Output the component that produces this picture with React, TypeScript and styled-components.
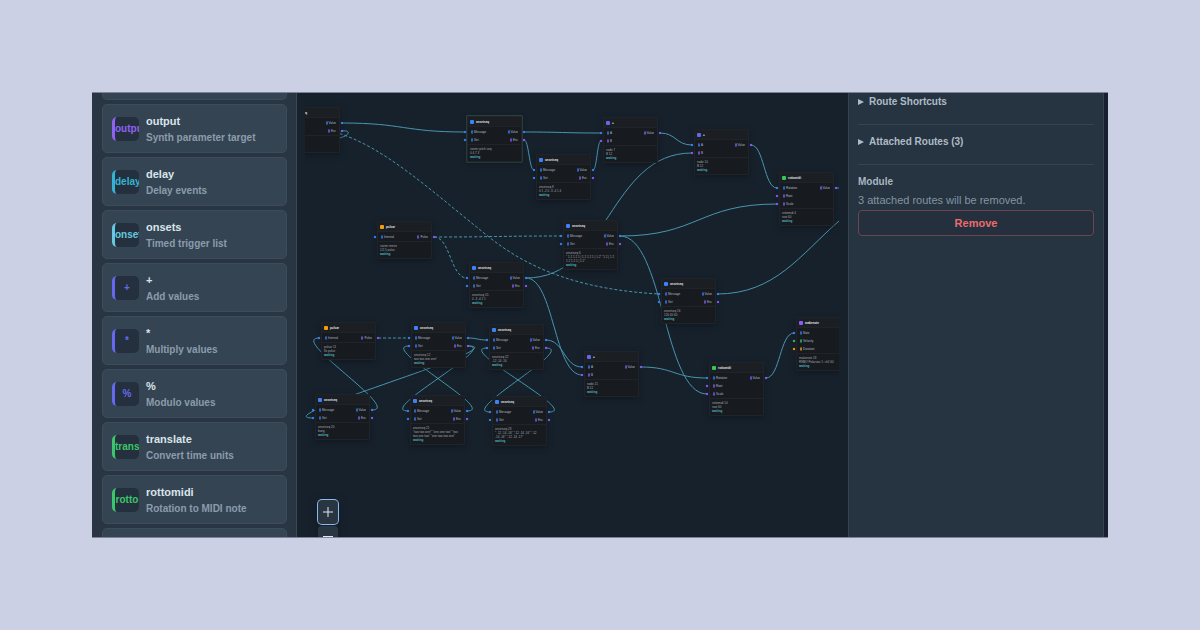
import React from "react";
import styled, { createGlobalStyle } from "styled-components";

const GlobalStyle = createGlobalStyle`
  *, *::before, *::after { box-sizing: border-box; }
  body {
    margin: 0;
    background: #cbd0e5;
    font-family: "Liberation Sans", Arial, Helvetica, sans-serif;
  }
  button { font: inherit; }
`;

const Page = styled.main`
  display: grid;
  height: 100vh;
  padding: 92px;
`;

const AppFrame = styled.div`
  display: grid;
  grid-template-columns: 205px minmax(0, 1fr) 256px;
  padding-right: 4px;
  min-height: 0;
  overflow: hidden;
  background: #17202e;
  border-top: 1px solid #7d8394;
  border-bottom: 1px solid #7d8394;
`;

/* ---------- Module palette ---------- */

const Palette = styled.aside`
  display: flex;
  flex-direction: column;
  gap: 4px;
  min-height: 0;
  overflow: hidden;
  padding: 0 9px 0 10px;
  background: #293543;
  border-right: 1px solid #3a4857;
`;

const cardSurface = `
  background: #354453;
  border: 1px solid #3d4c5a;
  border-radius: 5px;
`;

const CardTail = styled.div`
  ${cardSurface}
  flex: none;
  height: 7px;
  border-top: 0;
  border-radius: 0 0 5px 5px;
`;

const CardHead = styled.div`
  ${cardSurface}
  flex: none;
  height: 49px;
`;

const ModuleCard = styled.button`
  ${cardSurface}
  flex: none;
  display: flex;
  align-items: center;
  gap: 7px;
  height: 49px;
  padding: 0 9px;
  text-align: left;
`;

const ModuleBadge = styled.span<{ $accent: string }>`
  display: flex;
  align-items: center;
  justify-content: safe center;
  flex: none;
  width: 27px;
  height: 24px;
  overflow: hidden;
  border-left: 3px solid ${(p) => p.$accent};
  border-radius: 5px;
  background: #24303d;
  color: ${(p) => p.$accent};
  font-size: 10px;
  font-weight: 700;
  line-height: 12px;
`;

const ModuleText = styled.span`
  display: grid;
  gap: 1px;
  padding-top: 2px;
  font-weight: 700;
  line-height: 15px;
`;

const ModuleName = styled.span`
  color: #d9e4ea;
  font-size: 11px;
`;

const ModuleHint = styled.span`
  color: #8b9cab;
  font-size: 10px;
`;

/* ---------- Patch canvas ---------- */

const Canvas = styled.section`
  position: relative;
  min-width: 0;
  padding: 0 9px 0 8px;
  background: #17212c;
`;

const Viewport = styled.div`
  position: relative;
  height: 100%;
  overflow: hidden;
`;

const Wires = styled.svg`
  position: absolute;
  inset: 0;
  width: 100%;
  height: 100%;
  fill: none;
  stroke: #4796ad;
  stroke-width: 1;
`;

const NodeBox = styled.article<{ $selected?: boolean }>`
  position: absolute;
  width: 55px;
  padding-bottom: 2px;
  background: #171a1f;
  border: 1px solid #202429;
  border-radius: 1px;
  box-shadow: 0 2px 6px rgba(8, 12, 18, 0.4)${(p) => (p.$selected ? ", 0 0 0 1px #2c4840" : "")};
  font-size: 3px;
  line-height: 4px;
`;

const NodeHeader = styled.header`
  display: flex;
  align-items: center;
  gap: 2px;
  height: 10px;
  padding: 0 2px;
  background: #1b1f23;
  border-bottom: 1px solid #202429;
  color: #e2e6ea;
  font-weight: 700;
`;

const NodeDot = styled.i<{ $color: string }>`
  width: 4px;
  height: 4px;
  border-radius: 1px;
  background: ${(p) => p.$color};
`;

const PortList = styled.div`
  padding-top: 1px;
  border-bottom: 1px solid #202429;
`;

const PortRow = styled.div`
  display: flex;
  justify-content: space-between;
  height: 8px;
  padding: 0 3px;
`;

const Port = styled.span<{ $color: string; $side: "in" | "out" }>`
  position: relative;
  display: flex;
  align-items: center;
  gap: 1px;
  color: #b3bac1;

  &::before {
    content: "";
    width: 2px;
    height: 4px;
    border: 1px solid ${(p) => p.$color};
    border-radius: 1px;
    opacity: 0.7;
  }

  &::after {
    content: "";
    position: absolute;
    top: 3px;
    ${(p) => (p.$side === "in" ? "left: -7px" : "right: -7px")};
    width: 2px;
    height: 2px;
    border-radius: 1px;
    background: ${(p) => p.$color};
    box-shadow: 0 0 1px ${(p) => p.$color};
  }
`;

const NodeBody = styled.div`
  padding: 2px 2px 0;
  color: #a2a9b0;
`;

const NodeLine = styled.div`
  white-space: nowrap;
`;

const NodeStatus = styled.div`
  color: #4cb8c4;
  font-weight: 700;
`;

const ZoomControls = styled.div`
  position: absolute;
  left: 21px;
  bottom: -13px;
  display: grid;
  gap: 2px;
  border-radius: 4px;
  box-shadow: 0 2px 10px rgba(8, 12, 18, 0.35);
`;

const ZoomClip = styled.div`
  position: absolute;
  inset: 0;
  overflow: hidden;
  pointer-events: none;
`;

const ZoomButton = styled.button<{ $focused?: boolean }>`
  display: grid;
  place-items: center;
  width: 20px;
  height: 24px;
  padding: 0;
  border: 0;
  border-radius: 4px;
  background: #293642;
  color: #dfe7ee;
  pointer-events: auto;
  box-shadow: ${(p) => (p.$focused ? "0 0 0 1px #8ab8ef" : "none")};
`;

/* ---------- Inspector ---------- */

const Inspector = styled.aside`
  min-height: 0;
  overflow: hidden;
  padding: 1px 9px 0;
  background: #263340;
  border: solid #35434f;
  border-width: 0 1px;
  font-size: 10px;
  line-height: 16px;
`;

const Group = styled.details`
  padding-bottom: 14px;
  border-bottom: 1px solid #35434f;
  margin-bottom: 9px;
`;

const GroupTitle = styled.summary`
  display: flex;
  align-items: center;
  gap: 5px;
  color: #aebbc6;
  font-weight: 700;
  list-style: none;

  &::before {
    content: "";
    border: solid transparent;
    border-width: 3px 0 3px 6px;
    border-left-color: #aebbc6;
  }
`;

const Sections = styled.div`
  display: grid;
  grid-template-columns: minmax(0, 1fr);
`;

const SectionTitle = styled.h2`
  margin: 0;
  color: #a9b6c1;
  font-size: 10px;
  line-height: 16px;
`;

const Notice = styled.p`
  margin: 0;
  color: #8494a2;
  font-size: 11px;
  line-height: 20px;
`;

const RemoveButton = styled.button`
  height: 26px;
  padding: 0;
  border: 1px solid #6d4550;
  border-radius: 4px;
  background: #24303d;
  color: #ed6a6e;
  font-size: 11px;
  font-weight: 700;
`;

/* ---------- Data ---------- */

const BLUE = "#3b82f6";
const VIOLET = "#8b5cf6";
const INDIGO = "#6366f1";
const GREEN = "#34c759";
const AMBER = "#f59e0b";

const modules = [
  { name: "output", hint: "Synth parameter target", accent: "#8f62f0" },
  { name: "delay", hint: "Delay events", accent: "#35b4d2" },
  { name: "onsets", hint: "Timed trigger list", accent: "#67c8df" },
  { name: "+", hint: "Add values", accent: "#6669ee" },
  { name: "*", hint: "Multiply values", accent: "#6669ee" },
  { name: "%", hint: "Modulo values", accent: "#6669ee" },
  { name: "translate", hint: "Convert time units", accent: "#3cc56a" },
  { name: "rottomidi", hint: "Rotation to MIDI note", accent: "#3cc56a" },
];

type PortDef = [label: string, color: string];
interface Kind {
  title: string;
  color: string;
  inputs: PortDef[];
  outputs: PortDef[];
}

const kinds: Record<string, Kind> = {
  seq: {
    title: "onsetseq",
    color: BLUE,
    inputs: [["Message", BLUE], ["Set", BLUE]],
    outputs: [["Value", BLUE], ["Exc", VIOLET]],
  },
  pulsar: {
    title: "pulsar",
    color: AMBER,
    inputs: [["Internal", BLUE]],
    outputs: [["Pulse", VIOLET]],
  },
  add: {
    title: "+",
    color: INDIGO,
    inputs: [["A", BLUE], ["B", VIOLET]],
    outputs: [["Value", VIOLET]],
  },
  midi: {
    title: "rottomidi",
    color: GREEN,
    inputs: [["Rotation", BLUE], ["Root", VIOLET], ["Scale", VIOLET]],
    outputs: [["Value", VIOLET]],
  },
  note: {
    title: "makenote",
    color: VIOLET,
    inputs: [["Note", BLUE], ["Velocity", GREEN], ["Duration", AMBER]],
    outputs: [],
  },
};

interface NodeDef {
  kind: string;
  x: number;
  y: number;
  lines: string[];
  selected?: boolean;
}

const nodes: Record<string, NodeDef> = {
  source: { kind: "seq", x: -20, y: 14, lines: ["\u00a0", "\u00a0"] },
  pitch: { kind: "seq", x: 162, y: 23, lines: ["starter pitch seq", "0 4 7 3"], selected: true },
  seqB: { kind: "seq", x: 231, y: 61, lines: ["onsetseq 8", "0 1 -2 0 -3 -4 1 4"] },
  addA: { kind: "add", x: 298, y: 24, lines: ["node 7", "B 12"] },
  addB: { kind: "add", x: 389, y: 36, lines: ["node 10", "B 12"] },
  midiA: { kind: "midi", x: 474, y: 79, lines: ["rottomidi 4", "root 60"] },
  seqC: { kind: "seq", x: 258, y: 127, lines: ["onsetseq 6", "\" 1 2 1 2 1 | 1 2 1 2 1 | 1 2\" \"1 2 | 1 2", "1 2 1 2 1 | 1 2\""] },
  pulsarA: { kind: "pulsar", x: 72, y: 128, lines: ["starter metro", "1/2.5 pulse"] },
  seqD: { kind: "seq", x: 164, y: 169, lines: ["onsetseq 15", "0 -3 -4 2 1"] },
  seqE: { kind: "seq", x: 356, y: 185, lines: ["onsetseq 16", "120 40 60"] },
  note: { kind: "note", x: 491, y: 224, lines: ["makenote 18", "RNBO Polarstar 1: ch2 60"] },
  midiB: { kind: "midi", x: 404, y: 269, lines: ["rottomidi 14", "root 60"] },
  pulsarB: { kind: "pulsar", x: 16, y: 229, lines: ["pulsar 11", "8x pulse"] },
  seqF: { kind: "seq", x: 106, y: 229, lines: ["onsetseq 12", "two two one one!"] },
  seqG: { kind: "seq", x: 184, y: 231, lines: ["onsetseq 22", "-12 -14 -16"] },
  addC: { kind: "add", x: 279, y: 258, lines: ["node 21", "B 12"] },
  seqH: { kind: "seq", x: 10, y: 301, lines: ["onsetseq 20", "bang"] },
  seqI: { kind: "seq", x: 105, y: 302, lines: ["onsetseq 21", "\"two two one!\" \"one one two\" \"two", "two one two\" \"one two two one\""] },
  seqJ: { kind: "seq", x: 187, y: 303, lines: ["onsetseq 23", "\" -12 -14 -16\" \"-12 -14 -16\" \"-12", "-14 -16\" \"-12 -14 -17\""] },
};

type Link = [from: string, out: number, to: string, input: number, dashed?: boolean];

const links: Link[] = [
  ["source", 0, "pitch", 0],
  ["pitch", 0, "addA", 0],
  ["pitch", 1, "seqB", 0],
  ["seqB", 0, "addA", 1],
  ["addA", 0, "addB", 0],
  ["seqD", 0, "addB", 1],
  ["addB", 0, "midiA", 0],
  ["seqC", 0, "midiA", 2],
  ["seqC", 0, "midiB", 2],
  ["pulsarA", 0, "seqC", 0, true],
  ["pulsarA", 0, "seqD", 0, true],
  ["seqD", 0, "addC", 1],
  ["seqG", 0, "addC", 0],
  ["pulsarB", 0, "seqF", 0, true],
  ["seqF", 0, "seqG", 0],
  ["seqF", 1, "seqH", 1],
  ["seqF", 1, "seqI", 0],
  ["seqI", 0, "seqF", 1],
  ["seqH", 0, "pulsarB", 0],
  ["seqG", 1, "seqJ", 0],
  ["seqJ", 0, "seqG", 1],
  ["addC", 0, "midiB", 0],
  ["midiB", 0, "note", 0],
];

/* Wires that start or end outside the visible part of the patch. */
const looseWires = [
  { d: "M36 38 C46 37 44 41 40 43 S36 44 30 47", dashed: false },
  { d: "M30 39 C80 54 125 97 184 144 C230 181 285 197 354 201", dashed: true },
  { d: "M412 201 C470 201 495 162 534 128", dashed: false },
  { d: "M531 95 H540", dashed: false },
];

function wirePath([from, out, to, input]: Link) {
  const a = nodes[from];
  const b = nodes[to];
  const x1 = a.x + 57;
  const y1 = a.y + 16 + out * 8;
  const x2 = b.x - 2;
  const y2 = b.y + 16 + input * 8;
  const gap = x2 - x1;
  const bend = gap >= 0 ? gap / 2 : 20 - gap * 0.2;
  return `M${x1} ${y1} C${x1 + bend} ${y1} ${x2 - bend} ${y2} ${x2} ${y2}`;
}

function PatchNode({ node }: { node: NodeDef }) {
  const kind = kinds[node.kind];
  const rows = Math.max(kind.inputs.length, kind.outputs.length);
  return (
    <NodeBox $selected={node.selected} style={{ left: node.x, top: node.y }}>
      <NodeHeader>
        <NodeDot $color={kind.color} />
        {kind.title}
      </NodeHeader>
      <PortList>
        {Array.from({ length: rows }, (_, i) => (
          <PortRow key={i}>
            {kind.inputs[i] ? (
              <Port $side="in" $color={kind.inputs[i][1]}>{kind.inputs[i][0]}</Port>
            ) : (
              <span />
            )}
            {kind.outputs[i] && (
              <Port $side="out" $color={kind.outputs[i][1]}>{kind.outputs[i][0]}</Port>
            )}
          </PortRow>
        ))}
      </PortList>
      <NodeBody>
        {node.lines.map((line, i) => (
          <NodeLine key={i}>{line}</NodeLine>
        ))}
        <NodeStatus>waiting</NodeStatus>
      </NodeBody>
    </NodeBox>
  );
}

export default function App() {
  return (
    <>
      <GlobalStyle />
      <Page>
        <AppFrame>
          <Palette>
            <CardTail />
            {modules.map((m) => (
              <ModuleCard key={m.name} type="button">
                <ModuleBadge $accent={m.accent}>{m.name.slice(0, 5)}</ModuleBadge>
                <ModuleText>
                  <ModuleName>{m.name}</ModuleName>
                  <ModuleHint>{m.hint}</ModuleHint>
                </ModuleText>
              </ModuleCard>
            ))}
            <CardHead />
          </Palette>

          <Canvas>
            <Viewport>
              <Wires>
                {links.map((link) => (
                  <path
                    key={link.slice(0, 4).join("-")}
                    d={wirePath(link)}
                    strokeDasharray={link[4] ? "3 2" : undefined}
                  />
                ))}
                {looseWires.map((w) => (
                  <path key={w.d} d={w.d} strokeDasharray={w.dashed ? "3 2" : undefined} />
                ))}
              </Wires>
              {Object.entries(nodes).map(([id, node]) => (
                <PatchNode key={id} node={node} />
              ))}
            </Viewport>
            <ZoomClip>
              <ZoomControls>
                <ZoomButton type="button" aria-label="Zoom in" $focused>
                  <svg width="12" height="12" viewBox="0 0 12 12" stroke="currentColor" fill="none">
                    <path d="M6 1V11M1 6H11" />
                  </svg>
                </ZoomButton>
                <ZoomButton type="button" aria-label="Zoom out">
                  <svg width="12" height="4" viewBox="0 0 12 4" stroke="currentColor" fill="none">
                    <path d="M1 0.5H11" />
                  </svg>
                </ZoomButton>
              </ZoomControls>
            </ZoomClip>
          </Canvas>

          <Inspector>
            <Group>
              <GroupTitle>Route Shortcuts</GroupTitle>
            </Group>
            <Group>
              <GroupTitle>Attached Routes (3)</GroupTitle>
            </Group>
            <Sections>
              <SectionTitle>Module</SectionTitle>
              <Notice>3 attached routes will be removed.</Notice>
              <RemoveButton type="button">Remove</RemoveButton>
            </Sections>
          </Inspector>
        </AppFrame>
      </Page>
    </>
  );
}
